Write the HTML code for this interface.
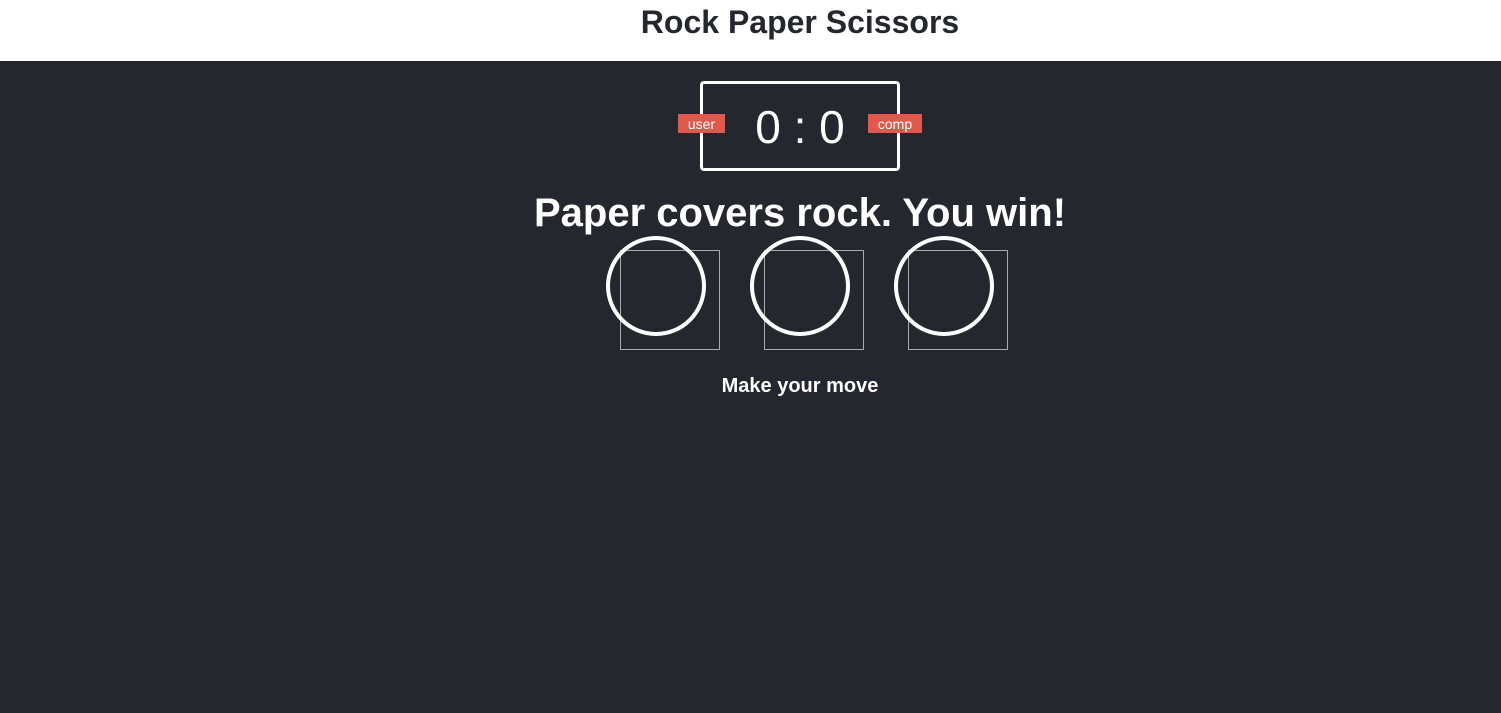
<!DOCTYPE html>
<html><head><style>
body{margin:0;width:1501px;height:713px;background:#24272e;font-family:"Liberation Sans",Arial,sans-serif;overflow:hidden;position:relative}
.hdr{position:absolute;left:0;top:0;width:1501px;height:61px;background:#fff}
.hdr h1{position:absolute;left:0;width:1600px;margin:0;text-align:center;font-size:32px;line-height:44px;color:#24272e;font-weight:bold}
.box{position:absolute;left:700px;top:81px;width:194px;height:84px;border:3px solid #fff;border-radius:4px;color:#fff;font-size:46px;text-align:center;line-height:86px}
.lab{position:absolute;top:114px;height:19px;background:#e2584d;color:#fff;font-size:14px;line-height:21px;text-align:center}
.msg{position:absolute;left:0;width:1600px;top:190px;text-align:center;color:#fff;font-size:40px;font-weight:bold;line-height:46px}
.c{position:absolute;width:92px;height:92px;border:4px solid #fff;border-radius:50%;top:236px}
.sq{position:absolute;width:98px;height:98px;border:1px solid #aaa;top:250px}
.mv{position:absolute;left:0;width:1600px;top:375px;text-align:center;color:#fff;font-size:20px;font-weight:bold}
</style></head><body>
<div class="hdr"><h1>Rock Paper Scissors</h1></div>
<div class="box">0 : 0</div>
<div class="lab" style="left:678px;width:47px">user</div>
<div class="lab" style="left:868px;width:54px">comp</div>
<div class="msg">Paper covers rock. You win!</div>
<div class="sq" style="left:620px"></div><div class="c" style="left:606px"></div>
<div class="sq" style="left:764px"></div><div class="c" style="left:750px"></div>
<div class="sq" style="left:908px"></div><div class="c" style="left:894px"></div>
<div class="mv">Make your move</div>
</body></html>
